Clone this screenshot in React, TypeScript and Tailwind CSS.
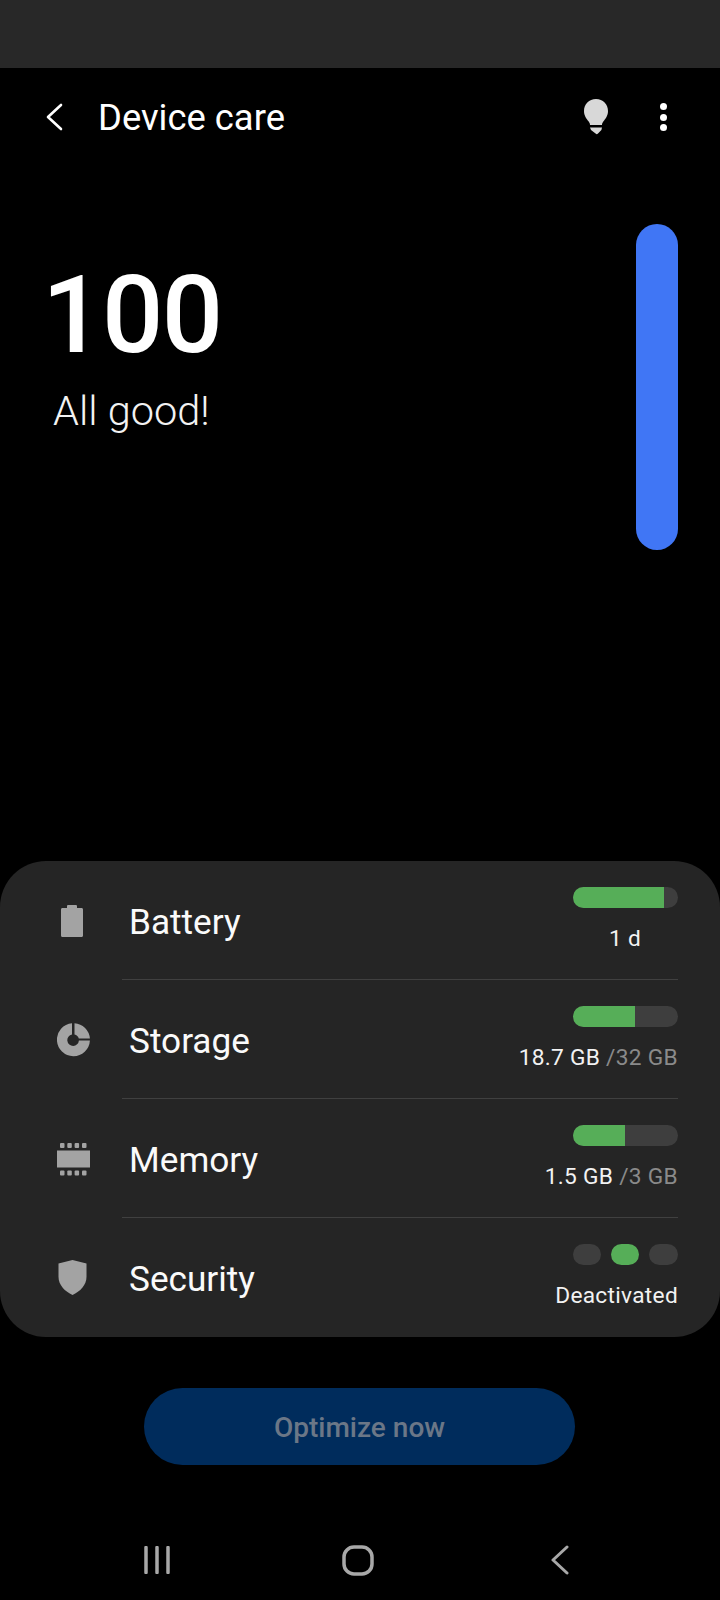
const font = "font-['Roboto',sans-serif]";

function CareRow({ icon, label, bar, children, last }: { icon: React.ReactNode; label: string; bar: React.ReactNode; children: React.ReactNode; last?: boolean }) {
  return (
    <div className="relative flex h-[119px] items-center">
      <div className="flex w-[129px] shrink-0 pl-[57px]">{icon}</div>
      <span className="pt-[4px] text-[35.2px] leading-none text-[#fafafa]">{label}</span>
      <div className="ml-auto flex flex-col items-end pr-[42px] pt-[1px]">
        {bar}
        <div className="mt-[15px] h-[32px] text-[22.7px] leading-[32px] tracking-[0.3px] text-[#f2f2f2]">{children}</div>
      </div>
      {!last && <div className="absolute right-[42px] bottom-0 left-[122px] h-px bg-[#404040]" />}
    </div>
  );
}

function Bar({ pct }: { pct: number }) {
  return (
    <div className="h-[21px] w-[105px] overflow-hidden rounded-full bg-[#3e3e3e]">
      <div className="h-full bg-[#56ae58]" style={{ width: `${pct}%` }} />
    </div>
  );
}

export default function App() {
  return (
    <div className={`flex h-[1600px] w-[720px] flex-col bg-black text-white ${font}`}>
      <div className="h-[68px] shrink-0 bg-[#282828]" />

      {/* header */}
      <div className="flex h-[98px] shrink-0 items-center">
        <svg width="20" height="30" viewBox="0 0 20 30" className="ml-[45px]" fill="none" stroke="#fff" strokeWidth="2.6" strokeLinecap="round" strokeLinejoin="round">
          <path d="M16 3 3 15l13 12" />
        </svg>
        <span className="ml-[33px] pt-[2px] text-[36.400px] leading-none text-white">Device care</span>
        <svg width="26" height="36" viewBox="0 0 26 36" className="ml-auto" fill="#d8d8d8">
          <path d="M13 0C6 0 1 5.300 1 12c0 4.600 2.400 7.600 4.700 10.600.9 1.200 1.300 2.400 1.300 3.400h12c0-1 .4-2.200 1.300-3.400C22.600 19.600 25 16.600 25 12 25 5.300 20 0 13 0Z" />
          <path d="M7 28.500h12l-.6 2.500-3.400 3.600c-1 .8-1.400.8-2.400 0L8 31Z" />
        </svg>
        <div className="mr-[53px] ml-[51px] flex flex-col gap-[3.500px]">
          <div className="size-[7px] rounded-full bg-white" />
          <div className="size-[7px] rounded-full bg-white" />
          <div className="size-[7px] rounded-full bg-white" />
        </div>
      </div>

      {/* score */}
      <div className="flex h-[695px] shrink-0 justify-between">
        <div className="pl-[42px]">
          <div className="mt-[86px] text-[108px] leading-[126px] font-medium tracking-[-1.500px]">100</div>
          <div className="mt-[8px] pl-[11px] text-[41.500px] leading-[50px] font-light text-[#f2f2f2]">All good!</div>
        </div>
        <div className="mt-[58px] mr-[42px] h-[326px] w-[42px] rounded-full bg-[#4076f5]" />
      </div>

      {/* card */}
      <div className="shrink-0 rounded-[46px] bg-[#252525]">
        <CareRow
          label="Battery"
          bar={<Bar pct={87} />}
          icon={
            <svg width="34" height="32" viewBox="0 0 34 32" fill="#a3a3a3">
              <path d="M4 4.500C4 3.700 4.600 3 5.400 3H10V1.200C10 .5 10.500 0 11.200 0h7.600c.7 0 1.200.5 1.200 1.200V3h4.600c.8 0 1.400.7 1.400 1.500v26c0 .8-.6 1.500-1.400 1.500H5.400C4.600 32 4 31.300 4 30.500Z" />
            </svg>
          }
        >
          <span className="mr-[37px]">1 d</span>
        </CareRow>
        <CareRow
          label="Storage"
          bar={<Bar pct={59} />}
          icon={
            <svg width="34" height="34" viewBox="0 0 34 34" fill="#a3a3a3">
              <path fillRule="evenodd" d="M15 .2v11.200a5.800 5.800 0 1 0 6.900 6.100h11A16.500 16.500 0 1 1 15 .2Z" />
              <path d="M17.500.2A16.500 16.500 0 0 1 32.900 15.500H21.800a5.800 5.800 0 0 0-4.300-4.100Z" />
            </svg>
          }
        >
          18.7 GB <span className="text-[#8a8a8a]">/32 GB</span>
        </CareRow>
        <CareRow
          label="Memory"
          bar={<Bar pct={49.500} />}
          icon={
            <svg width="34" height="33" viewBox="0 0 34 33" fill="#a3a3a3" className="mt-[1px]">
              <rect x="0" y="7.500" width="33" height="17" />
              <rect x="3" y="0" width="4.500" height="5" rx="1" />
              <rect x="10.300" y="0" width="4.500" height="5" rx="1" />
              <rect x="17.600" y="0" width="4.500" height="5" rx="1" />
              <rect x="25" y="0" width="4.500" height="5" rx="1" />
              <rect x="3" y="27.500" width="4.500" height="5" rx="1" />
              <rect x="10.300" y="27.500" width="4.500" height="5" rx="1" />
              <rect x="17.600" y="27.500" width="4.500" height="5" rx="1" />
              <rect x="25" y="27.500" width="4.500" height="5" rx="1" />
            </svg>
          }
        >
          1.5 GB <span className="text-[#8a8a8a]">/3 GB</span>
        </CareRow>
        <CareRow
          last
          label="Security"
          bar={
            <div className="flex h-[21px] w-[105px] justify-between">
              <div className="h-full w-[28px] rounded-full bg-[#3e3e3e]" />
              <div className="h-full w-[28px] rounded-full bg-[#56ae58]" />
              <div className="h-full w-[29px] rounded-full bg-[#3e3e3e]" />
            </div>
          }
          icon={
            <svg width="30" height="35" viewBox="0 0 30 35" fill="#a3a3a3" className="ml-px">
              <path d="M14.500 0 28.500 3.500V17c0 8-6.500 14.500-14 18C7 31.500.500 25 .500 17V3.500Z" />
            </svg>
          }
        >
          Deactivated
        </CareRow>
      </div>

      {/* button */}
      <div className="mt-[51px] ml-[144px] flex h-[77px] w-[431px] shrink-0 items-center justify-center rounded-full bg-[#002c5c]">
        <span className="pt-[2px] text-[28px] font-medium text-[#6b7787]">Optimize now</span>
      </div>

      {/* nav */}
      <div className="mt-[80px] flex h-[30px] shrink-0 items-center pl-[144px]">
        <svg width="28" height="28" viewBox="0 0 28 28" stroke="#a8a8a8" strokeWidth="3.500" strokeLinecap="round">
          <path d="M2 1.500v25M13 1.500v25M24 1.500v25" />
        </svg>
        <svg width="32" height="31" viewBox="0 0 32 31" fill="none" stroke="#a8a8a8" strokeWidth="3.500" className="ml-[170px]">
          <rect x="2" y="2" width="28" height="27" rx="10" />
        </svg>
        <svg width="20" height="30" viewBox="0 0 20 30" fill="none" stroke="#a8a8a8" strokeWidth="3" strokeLinecap="round" strokeLinejoin="round" className="ml-[176px]">
          <path d="M17 2 3 15l14 13" />
        </svg>
      </div>
    </div>
  );
}
